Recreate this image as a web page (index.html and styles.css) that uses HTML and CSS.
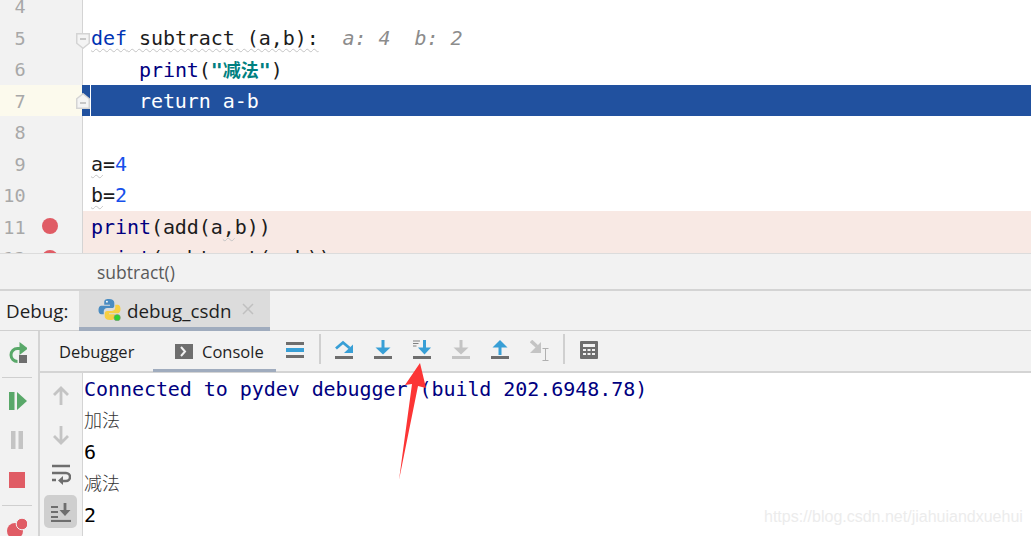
FILE: index.html
```html
<!DOCTYPE html>
<html lang="en">
<head>
<meta charset="utf-8">
<title>debug_csdn</title>
<link rel="stylesheet" href="styles.css">
</head>
<body>
<div class="app">
  <section class="editor">
    <div class="code">
      <div class="line"><span class="num">4</span><span class="src"></span></div>
      <div class="line"><span class="num">5</span><svg class="fold" viewBox="0 0 14 16"><path d="M.75.75h12.500v9.500l-6.250 5-6.250-5z" fill="#f4f4f4" stroke="#d4d4d4" stroke-width="1.500"/><path d="M4 6h6" stroke="#b8b8b8" stroke-width="1.500"/></svg><span class="src"><span class="wavy"><span class="kw">def</span> subtract (a,b):</span><span class="hint">  a: 4  b: 2</span></span></div>
      <div class="line"><span class="num">6</span><span class="src">    <span class="fn">print</span>(<span class="str">"<span class="cjk">减法</span>"</span>)</span></div>
      <div class="line current"><span class="num">7</span><svg class="fold fold-end" viewBox="0 0 14 16"><path d="M.75 15.250v-9.500l6.250-5 6.250 5v9.500z" fill="#f4f4f4" stroke="#d4d4d4" stroke-width="1.500"/><path d="M4 10h6" stroke="#b8b8b8" stroke-width="1.500"/></svg><span class="src">    return a-b</span></div>
      <div class="line"><span class="num">8</span><span class="src"></span></div>
      <div class="line"><span class="num">9</span><span class="src"><span class="wavy">a</span>=<span class="lit">4</span></span></div>
      <div class="line"><span class="num">10</span><span class="src"><span class="wavy">b</span>=<span class="lit">2</span></span></div>
      <div class="line bp"><span class="num">11</span><span class="dot"></span><span class="src"><span class="fn">print</span>(add(a<span class="wavy">,</span>b))</span></div>
      <div class="line bp"><span class="num">12</span><span class="dot"></span><span class="src"><span class="fn">print</span>(subtract(a,b))</span></div>
    </div>
  </section>
  <div class="crumb">subtract()</div>
  <div class="tabs">
    <span class="tabs-label">Debug:</span>
    <div class="tab">
      <svg class="py" viewBox="0 0 24 24"><path d="M11.500 1C7 1 6.500 2.500 6.500 4.500V7h6v1H3.500C1.500 8 .5 10 .5 12.500s1 4.500 3 4.500H6v-3c0-2 1.500-3.500 3.500-3.500h5c1.500 0 2.500-1 2.500-2.500v-3C17 2.500 15 1 11.500 1z" fill="#4a8cc2"/><circle cx="9.300" cy="3.800" r="1" fill="#fff"/><path d="M12.500 23c4.500 0 5-1.500 5-3.500V17h-6v-1h9c2 0 3-2 3-4.500S22.500 7 20.500 7H18v3c0 2-1.500 3.500-3.500 3.500h-5C8 13.500 7 14.500 7 16v3c0 2.500 2 4 5.500 4z" fill="#f6cf45"/><circle cx="20" cy="20.500" r="3.300" fill="#2fd02f" stroke="#8a8a8a" stroke-width=".6"/></svg>
      <span class="tab-text">debug_csdn</span>
      <svg class="close" viewBox="0 0 12 12"><path d="M1 1l10 10M11 1L1 11" stroke="#c0c0c0" stroke-width="1.500"/></svg>
    </div>
  </div>
  <div class="debug">
    <aside class="strip">
      <svg class="ic rerun" viewBox="0 0 20 22"><path d="M10.500 19.500A6.500 6.500 0 1 1 10.500 6.500H14" fill="none" stroke="#59a869" stroke-width="3"/><path d="M12.500 0l8.500 6.500-8.500 6.500z" fill="#59a869"/><rect x="12" y="13" width="8" height="8" fill="#6e6e6e"/></svg>
      <hr class="rule rule-top">
      <svg class="ic" viewBox="0 0 20 22"><rect x="2" y="2" width="5.500" height="18" fill="#59a869"/><path d="M10 2l10 9-10 9z" fill="#59a869"/></svg>
      <svg class="ic" viewBox="0 0 20 22"><rect x="4" y="2" width="4.500" height="18" fill="#c4c4c4"/><rect x="11.500" y="2" width="4.500" height="18" fill="#c4c4c4"/></svg>
      <svg class="ic" viewBox="0 0 20 22"><rect x="2" y="4" width="16" height="16" fill="#e05c65"/></svg>
      <hr class="rule">
      <svg class="ic" viewBox="0 0 20 22"><circle cx="8" cy="13" r="8" fill="#e05c65"/><circle cx="15" cy="6" r="5.800" fill="#e05c65" stroke="#f2f2f2"/></svg>
    </aside>
    <div class="panel">
      <div class="toolbar">
        <span class="sub plain">Debugger</span>
        <span class="sub selected"><svg class="term" viewBox="0 0 18 15"><rect width="18" height="15" fill="#6e6e6e"/><path d="M6 3l4 4.500-4 4.500" fill="none" stroke="#f2f2f2" stroke-width="2"/></svg>Console</span>
        <div class="actions">
          <svg class="ta menu" viewBox="0 0 18 16"><rect y="0" width="18" height="3" fill="#6e6e6e"/><rect y="6" width="18" height="4" fill="#389fd6"/><rect y="13" width="18" height="3" fill="#6e6e6e"/></svg>
          <i class="sep sep1"></i>
          <svg class="ta over" viewBox="0 0 20 20"><path d="M2 8.500l7-6 6.500 5.500" fill="none" stroke="#389fd6" stroke-width="2.800"/><path d="M19 4.500V13H10z" fill="#389fd6"/><rect x="1" y="16" width="18" height="3" fill="#6e6e6e"/></svg>
          <svg class="ta into" viewBox="0 0 20 20"><path d="M10 0v9" stroke="#389fd6" stroke-width="3"/><path d="M2.500 7.500h15l-7.500 7z" fill="#389fd6"/><rect x="1" y="16" width="18" height="3" fill="#6e6e6e"/></svg>
          <svg class="ta force" viewBox="0 0 20 20"><path d="M1 1h7M1 3.500h5.500M1 6h3.500" stroke="#808080" stroke-width="1.200"/><path d="M12.500 0v9" stroke="#389fd6" stroke-width="3"/><path d="M6 7.500h13l-6.500 7z" fill="#389fd6"/><rect x="1" y="16" width="18" height="3" fill="#6e6e6e"/></svg>
          <svg class="ta smart" viewBox="0 0 20 20"><path d="M10 0v9" stroke="#c4c4c4" stroke-width="3"/><path d="M2.500 7.500h15l-7.500 7z" fill="#c4c4c4"/><rect x="1" y="16" width="18" height="3" fill="#c4c4c4"/></svg>
          <svg class="ta out" viewBox="0 0 20 20"><path d="M10 15V6" stroke="#389fd6" stroke-width="3"/><path d="M2.500 7.500h15L10 0z" fill="#389fd6"/><rect x="1" y="16" width="18" height="3" fill="#6e6e6e"/></svg>
          <svg class="ta cursor" viewBox="0 0 20 21"><path d="M1 1l6 5.500" stroke="#c4c4c4" stroke-width="3.500"/><path d="M11 2v11H0z" fill="#c4c4c4"/><path d="M12.500 8.500h6M15.500 8.500v12M12.500 20.500h6" fill="none" stroke="#b0b0b0"/></svg>
          <i class="sep sep2"></i>
          <svg class="ta calc" viewBox="0 0 18 18"><rect width="18" height="18" rx="1" fill="#6e6e6e"/><rect x="3" y="3" width="12" height="3" fill="#f2f2f2"/><path d="M3 8h3v2H3zM7.500 8h3v2h-3zM12 8h3v2h-3zM3 12h3v2H3zM7.500 12h3v2h-3zM12 12h3v2h-3z" fill="#f2f2f2"/></svg>
        </div>
      </div>
      <div class="content">
        <div class="side">
          <svg class="si" viewBox="0 0 18 20"><path d="M9 19V3M2 9l7-7 7 7" fill="none" stroke="#c4c4c4" stroke-width="2.800"/></svg>
          <svg class="si" viewBox="0 0 18 20"><path d="M9 1v16M2 11l7 7 7-7" fill="none" stroke="#c4c4c4" stroke-width="2.800"/></svg>
          <svg class="si" viewBox="0 0 20 22"><path d="M1 2h18" stroke="#6e6e6e" stroke-width="2.500"/><path d="M1 9h14a3.500 3.500 0 0 1 0 8h-5" fill="none" stroke="#6e6e6e" stroke-width="2.500"/><path d="M1 16h4" stroke="#6e6e6e" stroke-width="2.500"/><path d="M12 12v9l-5-4.500z" fill="#6e6e6e"/></svg>
          <span class="scroll-on"><svg class="si2" viewBox="0 0 20 20"><path d="M0 5h7M0 10h7M0 15h7" stroke="#6e6e6e" stroke-width="2.200"/><path d="M14 1v9" stroke="#6e6e6e" stroke-width="2.800"/><path d="M8.500 8h11l-5.500 6z" fill="#6e6e6e"/><path d="M0 19h20" stroke="#6e6e6e" stroke-width="2.200"/></svg></span>
        </div>
        <div class="console">
          <div class="out-line sys">Connected to pydev debugger (build 202.6948.78)</div>
          <div class="out-line zh">加法</div>
          <div class="out-line">6</div>
          <div class="out-line zh">减法</div>
          <div class="out-line">2</div>
        </div>
      </div>
    </div>
  </div>
</div>
<svg class="arrow" viewBox="0 0 28 118"><path d="M21 0L6 22l7-1L0 117 19 23l8 2z" fill="#fc3535"/></svg>
<div class="mark">https://blog.csdn.net/jiahuiandxuehui</div>
</body>
</html>
```

FILE: styles.css
```css
* { box-sizing: border-box; }
html, body { margin: 0; height: 100%; overflow: hidden; background: #fff; }
body { position: relative; font-family: "Open Sans", "Noto Sans", sans-serif; color: #1f1f1f; }
.app { display: flex; flex-direction: column; height: 536px; }

.editor { height: 253px; overflow: hidden; flex: none; }
.code { margin-top: -9.6px; font-family: "DejaVu Sans Mono", monospace; font-size: 20px; letter-spacing: -0.06px; }
.line { position: relative; display: flex; height: 31.5px; line-height: 33px; white-space: pre; background: #fff; color: #1c1c1c; }
.num { flex: none; width: 83px; padding-right: 56.500px; background: #f2f2f2; border-right: 1px solid #d4d4d4; text-align: right; color: #a8a8a8; font-size: 18.500px; }
.src { padding-left: 8px; flex: 1; }
.fold { position: absolute; left: 76px; top: 11px; width: 14px; height: 16px; }
.fold-end { top: 8px; }
.kw { color: #0033b3; }
.fn { color: #000080; }
.lit { color: #1750eb; }
.str { color: #008080; font-weight: 700; }
.cjk { font-family: "Noto Sans CJK SC", sans-serif; font-size: 18px; letter-spacing: 0; }
.hint { color: #8c8c8c; font-style: italic; }
.wavy { text-decoration: underline wavy #c4c4c4 1px; text-underline-offset: 3px; }
.current .num { background: #fcfaed; border-right-color: #21519f; }
.current .src { background: linear-gradient(90deg, #21519f 7px, #fff 7px, #fff 8px, #21519f 8px); color: #fff; }
.bp .src { background: #f8e9e4; }
.dot { position: absolute; left: 42px; top: 7.500px; width: 16px; height: 16px; border-radius: 50%; background: #e05c65; }

.crumb { flex: none; height: 38px; padding: 6px 0 0 97px; background: #f2f2f2; border-top: 1px solid #dcdcdc; border-bottom: 2px solid #d4d4d4; font-size: 17.500px; color: #5a5a5a; }

.tabs { flex: none; height: 40px; display: flex; background: #f2f2f2; border-bottom: 1px solid #d0d0d0; }
.tabs-label { width: 79px; padding: 7px 0 0 6px; font-size: 18.800px; }
.tab { width: 191px; height: 40px; display: flex; align-items: center; gap: 6px; padding: 0 0 0 19px; background: #dcdcdc; border-bottom: 4px solid #a0acbe; font-size: 18.800px; }
.tab-text { padding-top: 4px; }
.py { width: 23px; height: 23px; }
.close { width: 12px; height: 12px; margin-left: 5px; }

.debug { flex: 1; min-height: 0; display: flex; background: #f2f2f2; }
.strip { width: 40px; flex: none; border-right: 2px solid #d4d4d4; display: flex; flex-direction: column; align-items: center; overflow: hidden; padding: 11px 4px 0 0; }
.ic { flex: none; width: 20px; height: 22px; margin-bottom: 17px; }
.rerun { margin-bottom: 13px; }
.rule { flex: none; width: 30px; height: 1px; margin: -2px 0 12px; border: 0; background: #cfcfcf; }
.rule-top { margin-top: 0; }
.panel { flex: 1; min-width: 0; display: flex; flex-direction: column; }

.toolbar { flex: none; height: 42px; display: flex; align-items: center; border-bottom: 2px solid #d4d4d4; }
.sub { font-size: 16.500px; display: flex; align-items: center; height: 42px; color: #1f1f1f; }
.plain { padding-left: 19px; width: 113px; }
.selected { width: 123px; gap: 9px; padding: 3px 0 0 22px; border-bottom: 3px solid #a0acbe; }
.term { width: 18px; height: 15px; }
.actions { position: relative; flex: 1; height: 42px; }
.ta { position: absolute; top: 10px; width: 20px; height: 20px; }
.menu { left: 10px; top: 12px; width: 18px; height: 16px; }
.sep { position: absolute; top: 4px; width: 2px; height: 30px; background: #d0d0d0; }
.sep1 { left: 43px; }
.over { left: 58px; }
.into { left: 97px; }
.force { left: 136px; }
.smart { left: 175px; }
.out { left: 214px; }
.cursor { left: 254px; height: 21px; }
.sep2 { left: 287px; }
.calc { left: 304px; top: 11px; width: 18px; height: 18px; }

.content { flex: 1; min-height: 0; display: flex; }
.side { width: 43px; flex: none; border-right: 1px solid #d4d4d4; display: flex; flex-direction: column; align-items: center; padding-top: 13px; }
.si { flex: none; width: 20px; height: 20px; margin-bottom: 19px; }
.side .si:nth-child(3) { height: 22px; margin-bottom: 9px; }
.scroll-on { flex: none; width: 33px; height: 33px; margin-left: -1px; display: flex; align-items: center; justify-content: center; background: #cfcfcf; border-radius: 5px; }
.si2 { width: 20px; height: 20px; }
.console { flex: 1; background: #fff; padding: 1px 0 0 1px; font-family: "DejaVu Sans Mono", monospace; font-size: 20px; letter-spacing: -0.06px; }
.out-line { height: 31.5px; line-height: 31.5px; white-space: pre; color: #000; }
.sys { color: #000080; }
.zh { font-family: "Noto Sans CJK SC", sans-serif; font-size: 18px; font-weight: 300; line-height: 26px; letter-spacing: 0; color: #333; }

.arrow { position: absolute; left: 399px; top: 363px; width: 28px; height: 118px; }
.mark { position: absolute; left: 764px; top: 508px; font-family: "Liberation Sans", sans-serif; font-size: 16px; color: #ececec; white-space: nowrap; }
```
